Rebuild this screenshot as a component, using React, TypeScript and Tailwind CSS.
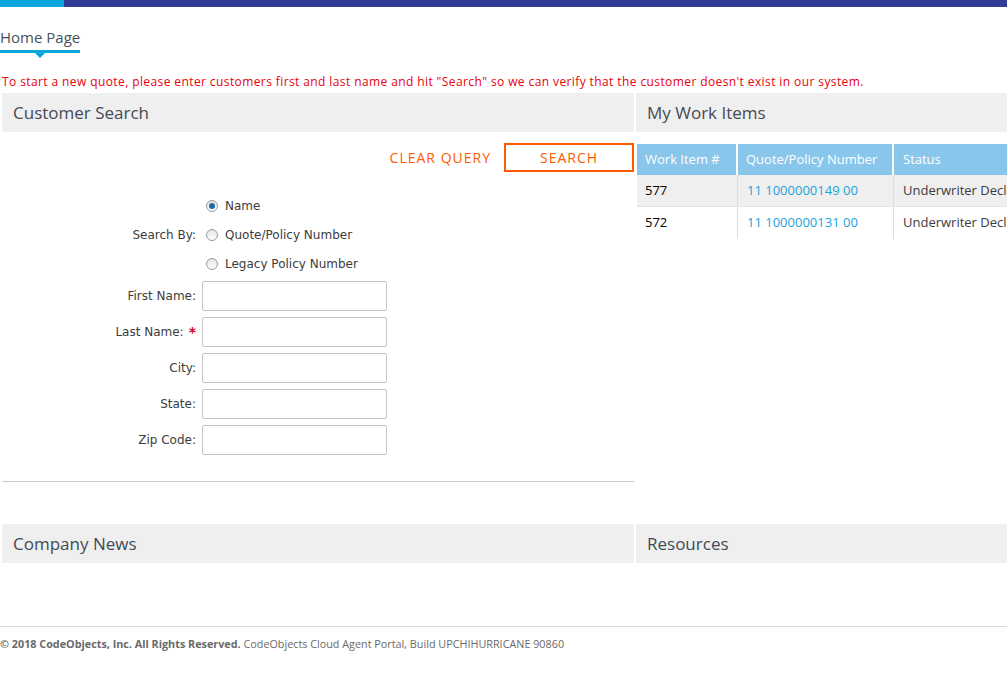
import React from "react";

const head = { fontFamily: "'Open Sans', 'Noto Sans', sans-serif" };
const form = { fontFamily: "'DejaVu Sans', Verdana, sans-serif" };

function Radio({ checked, label }: { checked?: boolean; label: string }) {
  return (
    <div className="flex h-[29px] items-center gap-[7px]">
      <span className="flex h-[12px] w-[12px] items-center justify-center rounded-full border border-[#9a9a9a] bg-gradient-to-b from-[#e4e4e4] to-[#ffffff]">
        {checked && <span className="h-[6px] w-[6px] rounded-full bg-[#1d6aa8]" />}
      </span>
      <span className="text-[12px] text-[#3c3c3c]">{label}</span>
    </div>
  );
}

function Field({ label, required }: { label: string; required?: boolean }) {
  return (
    <div className="flex h-[36px] items-center">
      <div className="flex w-[200px] items-center justify-end pr-[6px] text-[12px] text-[#3c3c3c]">
        {label}
        {required && <span className="ml-[5px] text-[14px] font-bold text-[#d0021b]">*</span>}
      </div>
      <div className="h-[30px] w-[185px] rounded-[2px] border border-[#c4c4c4] bg-white" />
    </div>
  );
}

function PanelHead({ title }: { title: string }) {
  return (
    <div className="flex h-[39px] items-center bg-[#efefef] px-[11px] text-[17px] text-[#444a55]" style={head}>
      {title}
    </div>
  );
}

export default function App() {
  const rows = [
    { id: "577", num: "11 1000000149 00", status: "Underwriter Declined", bg: "bg-[#efefef] border-b border-[#e2e2e2]" },
    { id: "572", num: "11 1000000131 00", status: "Underwriter Declined", bg: "bg-white" },
  ];

  return (
    <div className="h-[676px] w-[1007px] overflow-hidden bg-white" style={head}>
      <div className="flex h-[7px]">
        <div className="w-[64px] bg-[#0aa6dc]" />
        <div className="flex-1 bg-[#323c96]" />
      </div>

      <div className="mt-[20px] inline-flex flex-col items-center">
        <div className="h-[20px] text-[15px] leading-[20px] text-[#4a4f5a]">Home Page</div>
        <div className="mt-[3px] h-[3px] w-full bg-[#0aa6dc]" />
        <div className="h-0 w-0 border-x-[5px] border-t-[5px] border-x-transparent border-t-[#0aa6dc]" />
      </div>

      <div className="mt-[16px] whitespace-nowrap px-[2px] text-[12px] leading-[16px] tracking-[0.4px] text-[#e8000b]">
        To start a new quote, please enter customers first and last name and hit "Search" so we can verify that the customer doesn't exist in our system.
      </div>

      <div className="mt-[3px] flex gap-[2px] pl-[2px]">
        <div className="w-[632px] shrink-0">
          <PanelHead title="Customer Search" />
          <div className="mt-[11px] flex items-center justify-end">
            <span className="mr-[13px] text-[14px] tracking-[1px] text-[#ff5a00]">CLEAR QUERY</span>
            <span className="flex h-[29px] w-[130px] items-center justify-center border-2 border-[#ff5a00] text-[14px] tracking-[1px] text-[#ff5a00]">
              SEARCH
            </span>
          </div>

          <div className="mt-[19px]" style={form}>
            <div className="flex items-center">
              <div className="w-[200px] pr-[6px] text-right text-[12px] text-[#3c3c3c]">Search By:</div>
              <div className="ml-[4px] flex flex-col">
                <Radio checked label="Name" />
                <Radio label="Quote/Policy Number" />
                <Radio label="Legacy Policy Number" />
              </div>
            </div>
            <div>
              <Field label="First Name:" />
              <Field label="Last Name:" required />
              <Field label="City:" />
              <Field label="State:" />
              <Field label="Zip Code:" />
            </div>
          </div>

          <div className="mt-[23px] h-px bg-[#c8c8c8]" />
        </div>

        <div className="w-[380px] shrink-0">
          <PanelHead title="My Work Items" />
          <div className="ml-[1px] mt-[12px] text-[13px]">
            <div className="flex h-[31px] items-center bg-[#89c6eb] text-white">
              <div className="flex h-full w-[101px] shrink-0 items-center border-r-2 border-white px-[8px]">Work Item #</div>
              <div className="flex h-full w-[156px] shrink-0 items-center border-r-2 border-white px-[8px]">Quote/Policy Number</div>
              <div className="flex h-full flex-1 items-center whitespace-nowrap px-[9px]">Status</div>
            </div>
            {rows.map((r) => (
              <div key={r.id} className={`flex h-[32px] items-center ${r.bg}`}>
                <div className="flex h-full w-[101px] shrink-0 items-center border-r border-[#dcdcdc] px-[8px] text-black">{r.id}</div>
                <div className="flex h-full w-[156px] shrink-0 items-center border-r border-[#dcdcdc] px-[9px] text-[#1aa3dc]">{r.num}</div>
                <div className="flex h-full flex-1 items-center whitespace-nowrap px-[9px] text-[#3c3c3c]">{r.status}</div>
              </div>
            ))}
          </div>
        </div>
      </div>

      <div className="mt-[42px] flex gap-[2px] pl-[2px]">
        <div className="w-[632px] shrink-0">
          <PanelHead title="Company News" />
        </div>
        <div className="w-[380px] shrink-0">
          <PanelHead title="Resources" />
        </div>
      </div>

      <div className="mt-[63px] h-px bg-[#dadada]" />
      <div className="mt-[9px] whitespace-nowrap text-[10.8px] text-[#6a6a6a]">
        <span className="font-bold">© 2018 CodeObjects, Inc. All Rights Reserved.</span> CodeObjects Cloud Agent Portal, Build UPCHIHURRICANE 90860
      </div>
    </div>
  );
}
